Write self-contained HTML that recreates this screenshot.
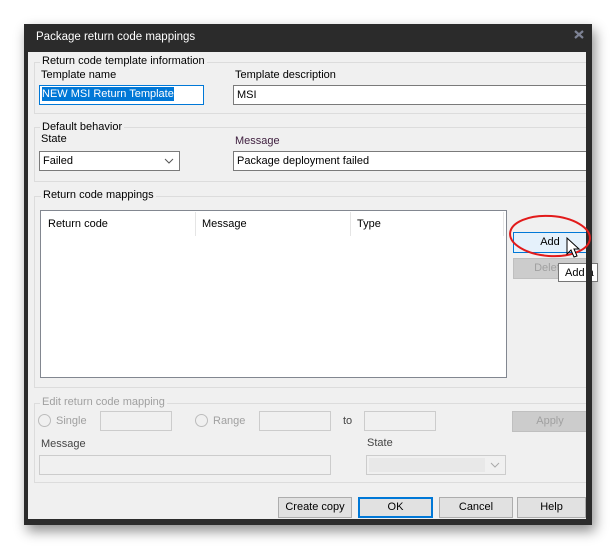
<!DOCTYPE html>
<html><head><style>
*{box-sizing:border-box;margin:0;padding:0}
body{width:616px;height:549px;background:#fff;position:relative;overflow:hidden;font-family:"Liberation Sans",sans-serif;font-size:11px;color:#000}
.a{position:absolute}
.frame{left:24px;top:24px;width:568px;height:501px;background:#2b2b2b;box-shadow:3px 6px 12px rgba(0,0,0,.45)}
.content{left:28px;top:52px;width:558px;height:467px;background:#f0f0f0;overflow:hidden}
.grp{position:absolute;border:1px solid #dcdcdc;border-right:none}
.leg{position:absolute;background:#f0f0f0;padding:0 2px;white-space:nowrap}
.inp{position:absolute;background:#fff;border:1px solid #7a7a7a;height:20px;padding:3px 3px;white-space:nowrap}
.dis{background:#f0f0f0;border-color:#ccc}
.btn{position:absolute;background:#e1e1e1;border:1px solid #adadad;height:21px;text-align:center;line-height:19px}
.g{color:#a0a0a0}
.radio{position:absolute;width:13px;height:13px;border:1px solid #bcbcbc;border-radius:50%;background:#f0f0f0}
.chev{position:absolute;right:5px;top:6px}
</style></head><body>
<div class="a frame"></div>
<div class="a" style="left:36px;top:31px;color:#fff;font-size:11.5px">Package return code mappings</div>
<svg class="a" style="left:574px;top:30px" width="10" height="9"><path d="M1 1 L9 8 M9 1 L1 8" stroke="#7d8294" stroke-width="2.2"/></svg>
<div class="a content">
 <div class="grp" style="left:6px;top:10px;width:560px;height:52px"></div>
 <div class="leg" style="left:12px;top:3px">Return code template information</div>
 <div class="a" style="left:13px;top:17px">Template name</div>
 <div class="inp" style="left:11px;top:33px;width:165px;border-color:#0078d7;padding:2px 2px"><span style="background:#0078d7;color:#fff;padding:1px 0">NEW MSI Return Template</span></div>
 <div class="a" style="left:207px;top:17px">Template description</div>
 <div class="inp" style="left:205px;top:33px;width:360px">MSI</div>
 <div class="grp" style="left:6px;top:75px;width:560px;height:55px"></div>
 <div class="leg" style="left:12px;top:69px">Default behavior</div>
 <div class="a" style="left:13px;top:81px">State</div>
 <div class="inp" style="left:11px;top:99px;width:141px">Failed<svg class="chev" width="10" height="6"><path d="M1 1 L5 5 L9 1" fill="none" stroke="#555"/></svg></div>
 <div class="a" style="left:207px;top:83px;color:#402040">Message</div>
 <div class="inp" style="left:205px;top:99px;width:360px">Package deployment failed</div>
 <div class="grp" style="left:6px;top:144px;width:560px;height:192px"></div>
 <div class="leg" style="left:13px;top:137px">Return code mappings</div>
 <div class="a" style="left:12px;top:158px;width:467px;height:168px;background:#fff;border:1px solid #828790"></div>
 <div class="a" style="left:20px;top:166px">Return code</div>
 <div class="a" style="left:167px;top:160px;width:1px;height:24px;background:#e5e5e5"></div>
 <div class="a" style="left:174px;top:166px">Message</div>
 <div class="a" style="left:322px;top:160px;width:1px;height:24px;background:#e5e5e5"></div>
 <div class="a" style="left:329px;top:166px">Type</div>
 <div class="a" style="left:475px;top:160px;width:1px;height:24px;background:#e5e5e5"></div>
 <div class="btn" style="left:485px;top:180px;width:74px;background:#e5f1fb;border-color:#0078d7">Add</div>
 <div class="btn g" style="left:485px;top:206px;width:74px;background:#cccccc;border-color:#bfbfbf">Delete</div>
 <div class="grp" style="left:6px;top:351px;width:560px;height:80px"></div>
 <div class="leg g" style="left:12px;top:344px">Edit return code mapping</div>
 <div class="radio" style="left:10px;top:362px"></div>
 <div class="a g" style="left:28px;top:363px">Single</div>
 <div class="inp dis" style="left:72px;top:359px;width:72px"></div>
 <div class="radio" style="left:167px;top:362px"></div>
 <div class="a g" style="left:185px;top:363px">Range</div>
 <div class="inp dis" style="left:231px;top:359px;width:72px"></div>
 <div class="a" style="left:315px;top:363px;color:#444">to</div>
 <div class="inp dis" style="left:336px;top:359px;width:72px"></div>
 <div class="btn g" style="left:484px;top:359px;width:76px;background:#cccccc;border-color:#bfbfbf">Apply</div>
 <div class="a" style="left:13px;top:386px;color:#444">Message</div>
 <div class="inp dis" style="left:11px;top:403px;width:292px"></div>
 <div class="a" style="left:339px;top:385px;color:#444">State</div>
 <div class="inp dis" style="left:338px;top:403px;width:140px"><div style="position:absolute;left:2px;top:2px;width:116px;height:14px;background:#e8e8e8"></div><svg class="chev" width="10" height="6"><path d="M1 1 L5 5 L9 1" fill="none" stroke="#aaa"/></svg></div>
 <div class="btn" style="left:250px;top:445px;width:74px">Create copy</div>
 <div class="btn" style="left:330px;top:445px;width:75px;border:2px solid #0078d7;line-height:17px">OK</div>
 <div class="btn" style="left:411px;top:445px;width:74px">Cancel</div>
 <div class="btn" style="left:489px;top:445px;width:69px">Help</div>
</div>
<div class="a" style="left:558px;top:263px;width:40px;height:19px;background:#fff;border:1px solid #767676;padding:3px 6px;white-space:nowrap;overflow:hidden">Add a</div>
<div class="a" style="left:586px;top:262px;width:6px;height:22px;background:#2b2b2b"></div>
<svg class="a" style="left:0;top:0" width="616" height="549">
 <ellipse cx="550" cy="236" rx="40" ry="20" fill="none" stroke="#e21b1b" stroke-width="2" transform="rotate(4 550 236)"/>
 <path d="M567 238 L567 254 L571 250 L574 257 L577 256 L574 249 L579 249 Z" fill="#fff" stroke="#000" stroke-width="1"/>
</svg>
</body></html>
